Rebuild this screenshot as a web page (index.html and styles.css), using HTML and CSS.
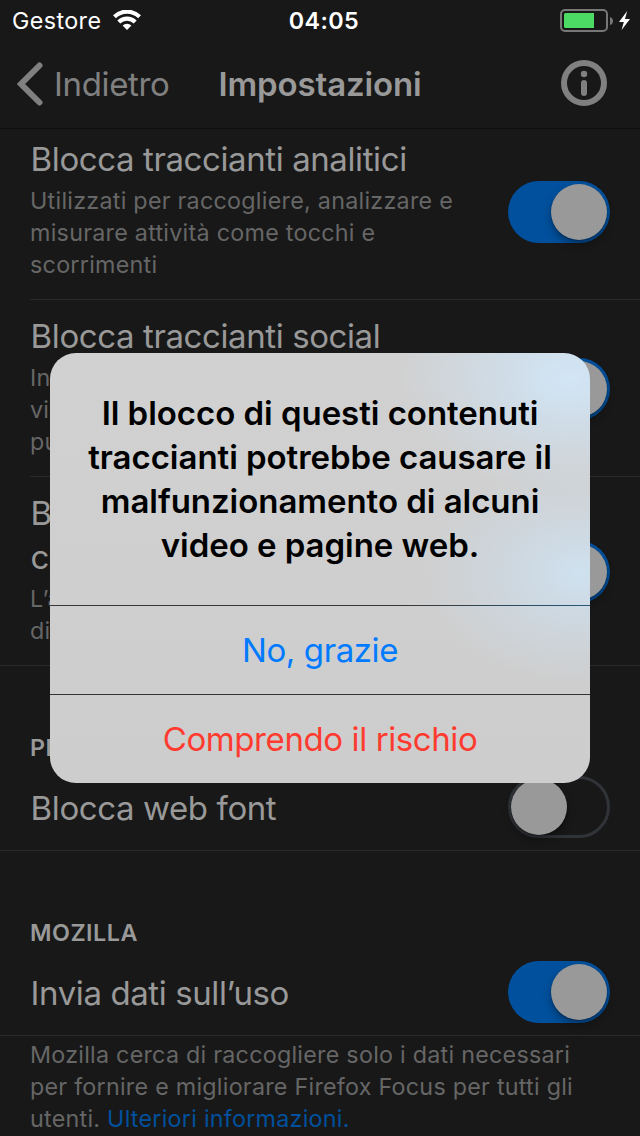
FILE: index.html
```html
<!DOCTYPE html>
<html lang="it">
<head>
<meta charset="utf-8">
<title>Impostazioni</title>
<link rel="stylesheet" href="styles.css">
</head>
<body>
<div class="screen">
  <header class="status">
    <div class="carrier"><span>Gestore</span>
      <svg class="wifi" width="28" height="20" viewBox="0 0 28 20"><g fill="none" stroke="#fff" stroke-width="4.200"><path d="M1.400 6.800a18 18 0 0 1 25.200 0"/><path d="M5.800 11.900a11.700 11.700 0 0 1 16.400 0"/></g><path d="M14 20l-4.400-4.500a6.300 6.300 0 0 1 8.800 0z" fill="#fff"/></svg>
    </div>
    <div class="clock">04:05</div>
    <div class="power">
      <svg width="72" height="24" viewBox="0 0 72 24"><rect x="1" y="1" width="46" height="21" rx="4" fill="none" stroke="#777" stroke-width="2"/><path d="M5.500 4H34v15H5.500Q4 19 4 17.500v-12Q4 4 5.500 4z" fill="#4cd964"/><path d="M50 8q3 1 3 4t-3 4z" fill="#777"/><path d="M67.200 2L59 13h4.800L61.600 21 70 10h-5z" fill="#fff"/></svg>
    </div>
  </header>
  <nav class="nav">
    <div class="back"><svg width="26" height="44" viewBox="0 0 26 44"><path d="M22.500 3.500L4 22l18.500 18.500" fill="none" stroke="#808080" stroke-width="6" stroke-linecap="round" stroke-linejoin="miter"/></svg><span>Indietro</span></div>
    <h1>Impostazioni</h1>
    <svg class="info" width="46" height="46" viewBox="0 0 46 46"><circle cx="23" cy="23" r="20" fill="none" stroke="#808080" stroke-width="6"/><circle cx="23" cy="14" r="3.200" fill="#808080"/><rect x="20" y="20" width="6" height="16" rx="3" fill="#808080"/></svg>
  </nav>
  <main>
    <section class="row analytics"><div class="copy"><h2>Blocca traccianti analitici</h2><p>Utilizzati per raccogliere, analizzare e<br>misurare attività come tocchi e<br>scorrimenti</p></div><div class="toggle on"><i></i></div></section>
    <section class="row social"><div class="copy"><h2>Blocca traccianti social</h2><p>In<br>vi<br>pu</p></div><div class="toggle on"><i></i></div></section>
    <section class="row content"><div class="copy"><h2>B<br>c</h2><p>L’a<br>di</p></div><div class="toggle on"><i></i></div></section>
    <h3>PR</h3>
    <section class="row single"><h2>Blocca web font</h2><div class="toggle off"><i></i></div></section>
    <h3>MOZILLA</h3>
    <section class="row single"><h2>Invia dati sull’uso</h2><div class="toggle on"><i></i></div></section>
    <p class="note">Mozilla cerca di raccogliere solo i dati necessari<br>per fornire e migliorare Firefox Focus per tutti gli<br>utenti. <a>Ulteriori informazioni.</a></p>
  </main>
  <div class="dialog">
    <div class="message"><span>Il blocco di questi contenuti</span><span>traccianti potrebbe causare il</span><span>malfunzionamento di alcuni</span><span>video e pagine web.</span></div>
    <div class="action cancel"><span>No, grazie</span></div>
    <div class="action accept"><span>Comprendo il rischio</span></div>
  </div>
</div>
</body>
</html>
```

FILE: styles.css
```css
* { box-sizing: border-box; }
body { margin: 0; background: #181818; }
h1, h2, h3, p { margin: 0; font-weight: 400; }
svg { display: block; flex: none; }
.screen { position: relative; width: 640px; height: 1136px; overflow: hidden; background: #181818; color: #999; font-family: Inter, "Liberation Sans", sans-serif; white-space: nowrap; }
.status { height: 40px; display: grid; grid-template-columns: 1fr 80px 1fr; align-items: center; color: #fff; font-size: 23.3px; line-height: 38px; }
.status span, .clock { padding-top: 2px; }
.carrier { display: flex; align-items: center; padding-left: 12px; gap: 12px; letter-spacing: .4px; }
.clock { text-align: center; font-weight: 600; letter-spacing: .4px; padding-left: 8px; }
.power { display: flex; justify-content: flex-end; padding: 1px 8px 0 0; }
.nav { height: 89px; display: grid; grid-template-columns: 200px 1fr 200px; align-items: center; border-bottom: 1px solid #0e0e0e; }
.back { display: flex; align-items: center; gap: 11px; padding-left: 17px; color: #808080; font-size: 33px; letter-spacing: -.35px; }
.nav h1 { text-align: center; font-size: 33px; font-weight: 600; letter-spacing: -.15px; }
.info { justify-self: end; margin-right: 33px; margin-top: -2px; }
.row { display: flex; justify-content: space-between; padding-right: 30px; margin-left: 30px; border-bottom: 1px solid #2a2a2a; }
.row h2 { font-size: 33px; line-height: 44px; letter-spacing: -.4px; padding-left: .6px; }
.row p, .note { font-size: 23.3px; line-height: 32px; letter-spacing: .26px; color: #666; }
.analytics { height: 171px; padding-top: 8px; }
.social { height: 177px; padding-top: 14px; }
.content { height: 189px; padding-top: 14px; margin-left: 0; padding-left: 30px; }
.copy p { margin-top: 4px; }
.analytics .toggle { margin-top: 44px; }
.social .toggle { margin-top: 44px; }
.content .toggle { margin-top: 50px; }
.toggle { flex: none; width: 102px; height: 62px; border-radius: 31px; display: flex; padding: 3px; }
.toggle i { width: 56px; height: 56px; border-radius: 50%; background: #999; box-shadow: 0 5px 9px rgba(0,0,0,.3), 0 1px 2px rgba(0,0,0,.3); }
.on { background: #00509d; justify-content: flex-end; }
.off { border: 3px solid #303338; padding: 0; }
h3 { height: 100px; padding: 66px 30px 0; font-size: 23.3px; line-height: 32px; font-weight: 600; letter-spacing: .5px; }
.single { height: 85px; align-items: center; margin-left: 0; padding-left: 30px; }
.single .toggle { margin-bottom: 2px; }
.note { padding: 3px 30px 0; letter-spacing: .25px; }
.note a { color: #00509d; }
.dialog { position: absolute; left: 50px; top: 353px; width: 540px; height: 430px; border-radius: 26px; overflow: hidden; display: grid; grid-template-rows: 252px 89px 89px; background: radial-gradient(ellipse 170px 115px at 520px 25px, #d2e6f6 0, rgba(207,225,240,.7) 40%, rgba(207,215,222,0) 100%), radial-gradient(ellipse 155px 110px at 530px 220px, #cfe1ef 0, rgba(205,221,234,.65) 40%, rgba(205,213,220,0) 100%), linear-gradient(#d1d1d1, #cdcdcd); }
.message { display: flex; flex-direction: column; align-items: center; padding-top: 38px; color: #000; font-size: 33px; line-height: 44px; font-weight: 600; letter-spacing: -.04px; }
.action { display: flex; justify-content: center; align-items: center; font-size: 33px; letter-spacing: -.4px; border-top: 1px solid #303338; }
.cancel { color: #007aff; border-image: linear-gradient(90deg, #383838 65%, #285878) 1; }
.accept { color: #ff3b30; }
```
